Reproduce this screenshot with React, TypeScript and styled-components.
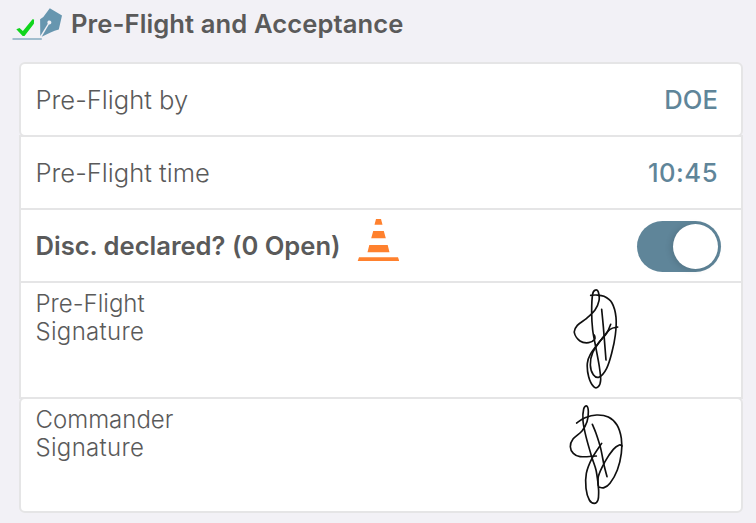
import React from "react";
import styled, { createGlobalStyle } from "styled-components";

const GlobalStyle = createGlobalStyle`
  * { box-sizing: border-box; }
  body { margin: 0; background: #f2f1f6; }
`;

const Page = styled.main`
  width: 756px;
  height: 523px;
  overflow: hidden;
  background: #f2f1f6;
  color: #5a5a5a;
  font-family: Inter, "Liberation Sans", sans-serif;
  padding-left: 12px;
`;

const Header = styled.header`
  display: flex;
  align-items: center;
  height: 62px;
  padding-bottom: 14px;
  gap: 9px;
`;

const Title = styled.h1`
  margin: 0;
  font-size: 25.6px;
  line-height: 30px;
  font-weight: 600;
  letter-spacing: 0.09px;
  white-space: nowrap;
`;

const Card = styled.section`
  width: 724px;
  margin-left: 7px;
`;

const Row = styled.div<{ $height: number; $rounded?: boolean }>`
  display: flex;
  align-items: center;
  height: ${(p) => p.$height}px;
  margin-bottom: -2px;
  padding: 1px 20px 0 14.5px;
  background: #fff;
  border: 2px solid #e5e5e6;
  border-radius: ${(p) => (p.$rounded ? "6px" : "0")};
`;

const SignatureRow = styled(Row)<{ $top: number }>`
  align-items: flex-start;
  padding-top: ${(p) => p.$top}px;
`;

const Label = styled.span<{ $strong?: boolean; $spacing?: number }>`
  font-size: 25.6px;
  line-height: 30px;
  font-weight: ${(p) => (p.$strong ? 600 : 300)};
  letter-spacing: ${(p) => p.$spacing ?? 0}px;
  white-space: nowrap;
`;

const SignatureLabel = styled.span`
  width: 150px;
  font-size: 24px;
  line-height: 28px;
  font-weight: 300;
`;

const SpacedLine = styled.span`
  display: block;
  letter-spacing: 0.3px;
`;

const Value = styled.span<{ $spacing?: number }>`
  margin-left: auto;
  margin-right: 3px;
  color: #5f8599;
  font-size: 25.6px;
  line-height: 30px;
  font-weight: 500;
  letter-spacing: ${(p) => p.$spacing ?? 0}px;
`;

const Cone = styled.svg`
  margin: -12px 0 0 16px;
  flex: none;
`;

const Switch = styled.button`
  display: flex;
  justify-content: flex-end;
  align-items: center;
  width: 84px;
  height: 51px;
  margin-left: auto;
  padding: 3px;
  border: 0;
  border-radius: 26px;
  background: #5f8599;
`;

const Knob = styled.span`
  width: 45px;
  height: 45px;
  border-radius: 50%;
  background: #fff;
  box-shadow: -2px 1px 6px rgba(0, 0, 0, 0.13);
`;

const SignatureCanvas = styled.svg`
  margin: -8px 81px 0 auto;
  flex: none;
  fill: none;
  stroke: #101010;
  stroke-width: 5;
  stroke-linecap: round;
  stroke-linejoin: round;
`;

type Point = [number, number];

/** Joins sampled pen positions with Catmull-Rom curves. */
function smoothStroke(points: Point[]): string {
  let d = `M${points[0][0]} ${points[0][1]}`;
  for (let i = 0; i < points.length - 1; i++) {
    const before = points[i - 1] ?? points[i];
    const from = points[i];
    const to = points[i + 1];
    const after = points[i + 2] ?? to;
    d += `C${from[0] + (to[0] - before[0]) / 6} ${from[1] + (to[1] - before[1]) / 6}`;
    d += ` ${to[0] - (after[0] - from[0]) / 6} ${to[1] - (after[1] - from[1]) / 6}`;
    d += ` ${to[0]} ${to[1]}`;
  }
  return d;
}

const preFlightStrokes: Point[][] = [
  [[92, 46], [108, 45], [132, 49], [156, 69], [168, 112], [166, 165], [155, 220], [140, 265], [118, 291], [100, 284], [91, 255], [98, 218], [126, 176], [150, 148], [173, 141]],
  [[103, 165], [104, 178], [86, 188], [60, 183], [43, 158], [52, 136], [80, 115], [105, 90], [117, 62], [115, 36], [107, 30], [98, 42], [95, 95], [98, 150], [108, 205], [118, 260], [122, 300], [115, 320], [101, 320], [86, 290], [82, 250], [91, 223], [117, 187], [140, 160], [152, 133]],
  [[125, 88], [130, 140], [134, 190], [138, 240]],
];

const commanderStrokes: Point[][] = [
  [[50, 84], [75, 68], [110, 60], [145, 66], [171, 90], [184, 130], [184, 175], [172, 225], [150, 265], [132, 278], [116, 276]],
  [[186, 153], [178, 150], [160, 163], [135, 200], [115, 245], [116, 290], [114, 315], [103, 325], [88, 315], [78, 280], [79, 235], [96, 190], [125, 145]],
  [[109, 183], [60, 185], [40, 175], [31, 155], [39, 132], [66, 108], [81, 80], [85, 50], [80, 33], [71, 42], [69, 78], [78, 125], [95, 185], [108, 225], [115, 272]],
  [[97, 88], [108, 115], [122, 160], [132, 210], [141, 245]],
];

function Signature({ strokes, top }: { strokes: Point[][]; top: number }) {
  return (
    <SignatureCanvas width="80" height="108" viewBox={`0 ${top} 240 324`}>
      {strokes.map((points, i) => (
        <path key={i} d={smoothStroke(points)} />
      ))}
    </SignatureCanvas>
  );
}

function SignIcon() {
  return (
    <svg width="50" height="34" viewBox="12 7 50 34">
      <path d="M12.5 39h29.3" stroke="#86abc0" strokeWidth="1.5" />
      <path d="M16.3 29.3l3.2-1.4 3.4 3 9.6-11.7 1.6.3-.2 4.3-9.4 12.3h-1.8z" fill="#10d51c" />
      <path d="M49.8 8.2L62 15.4l-3.2 14.1c-5.7 1.7-10.5 3.7-17.1 7.3l7.2-12.4a2 2 0 1 0-1.1-.7L40.3 36l-.2-16.7 3.2-2.2z" fill="#6796af" />
    </svg>
  );
}

function ConeIcon() {
  return (
    <Cone width="42" height="44" viewBox="357 218 42 44" fill="#ff812e">
      <path d="M376 219h5l1.5 5.7h-8zM373.2 231h10.6l2 7.2h-14.6zM369.3 245h18.4l1.8 7.2h-22zM359 257.2h39l1.2 3.7h-41.5z" />
    </Cone>
  );
}

export default function App() {
  return (
    <>
      <GlobalStyle />
      <Page>
        <Header>
          <SignIcon />
          <Title>Pre-Flight and Acceptance</Title>
        </Header>
        <Card>
          <Row $height={75} $rounded>
            <Label>Pre-Flight by</Label>
            <Value $spacing={0.1}>DOE</Value>
          </Row>
          <Row $height={75}>
            <Label>Pre-Flight time</Label>
            <Value $spacing={0.5}>10:45</Value>
          </Row>
          <Row $height={75}>
            <Label $strong $spacing={-0.02}>Disc. declared? (0 Open)</Label>
            <ConeIcon />
            <Switch role="switch" aria-checked="true" aria-label="Discrepancies declared">
              <Knob />
            </Switch>
          </Row>
          <SignatureRow $height={118} $top={7}>
            <SignatureLabel>Pre-Flight<SpacedLine>Signature</SpacedLine></SignatureLabel>
            <Signature strokes={preFlightStrokes} top={6} />
          </SignatureRow>
          <SignatureRow $height={116} $top={7} $rounded>
            <SignatureLabel>Commander<SpacedLine>Signature</SpacedLine></SignatureLabel>
            <Signature strokes={commanderStrokes} top={9} />
          </SignatureRow>
        </Card>
      </Page>
    </>
  );
}
